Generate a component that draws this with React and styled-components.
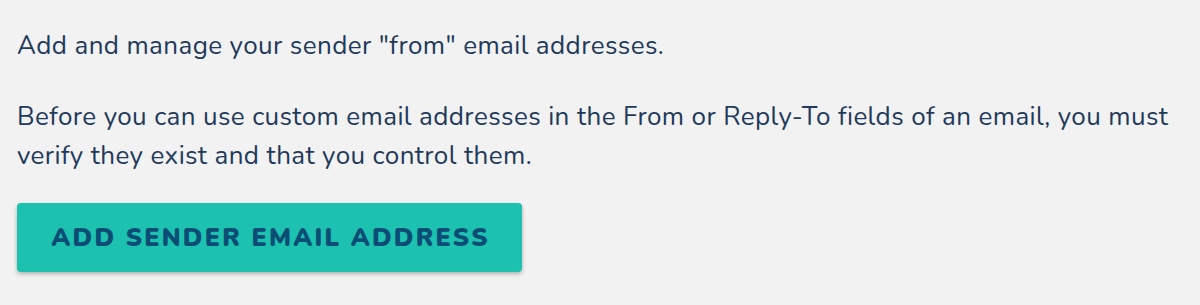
import React from "react";
import styled, { createGlobalStyle } from "styled-components";

const Global = createGlobalStyle`
  html, body { margin: 0; padding: 0; background: #f2f2f2; }
  body { font-family: "Nunito", "Lato", "Noto Sans", sans-serif; }
`;

const Page = styled.div`
  padding: 26px 17px 30px;
  width: 1175px;
  box-sizing: content-box;
`;

const Text = styled.p`
  margin: 0 0 ${(p) => p.$gap || 0}px;
  font-size: 26px;
  letter-spacing: 0.4px;
  line-height: 39px;
  color: #1f3a5b;
`;

const Button = styled.button`
  margin-top: 28px;
  width: 505px;
  height: 69px;
  border: none;
  border-radius: 4px;
  background: #1cc1b0;
  color: #0c4d76;
  font-family: inherit;
  font-weight: 900;
  font-size: 25px;
  letter-spacing: 2.2px;
  text-indent: 2.2px;
  text-transform: uppercase;
  box-shadow: 0 2px 4px rgba(0, 0, 0, 0.28);
  cursor: pointer;
`;

export default function App() {
  return (
    <>
      <Global />
      <Page>
        <Text $gap={32}>Add and manage your sender "from" email addresses.</Text>
        <Text>
          Before you can use custom email addresses in the From or Reply-To fields of an email, you must verify they exist and that you control them.
        </Text>
        <Button>Add sender email address</Button>
      </Page>
    </>
  );
}
